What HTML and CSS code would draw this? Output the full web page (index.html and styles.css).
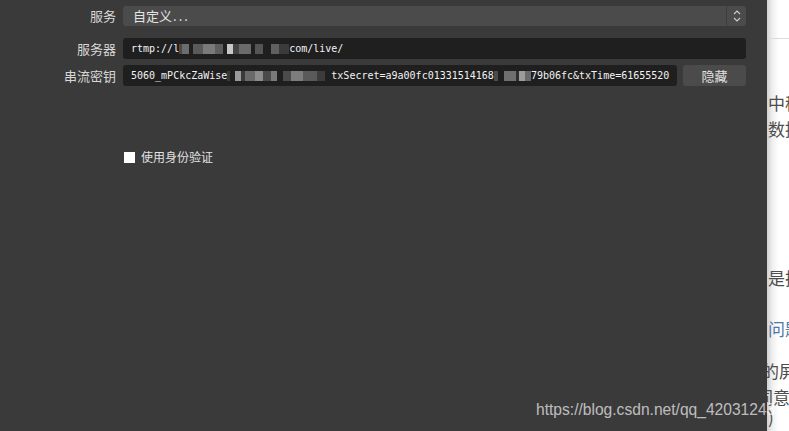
FILE: index.html
```html
<!DOCTYPE html>
<html>
<head>
<meta charset="utf-8">
<link rel="stylesheet" href="styles.css">
</head>
<body>
<div class="screen">
  <div class="obs">
    <div class="form">
      <div class="label l1">服务</div>
      <div class="combo">
        <span class="combo-text">自定义<span class="dots">...</span></span>
        <span class="combo-arrows">
          <svg width="10" height="16" viewBox="0 0 10 16"><path d="M2 6 L5 3 L8 6" fill="none" stroke="#cfcfcf" stroke-width="1.1"/><path d="M2 10 L5 13 L8 10" fill="none" stroke="#cfcfcf" stroke-width="1.1"/></svg>
        </span>
      </div>
      <div class="label l2">服务器</div>
      <div class="input i2"><span>rtmp://l</span><span class="blur b1"></span><span>com/live/</span></div>
      <div class="label l3">串流密钥</div>
      <div class="keyrow">
        <div class="input i3"><span>5060_mPCkcZaWise</span><span class="blur b2"></span><span>txSecret=a9a00fc01331514168</span><span class="blur b3"></span><span>79b06fc&amp;txTime=61655520</span></div>
        <button class="btn">隐藏</button>
      </div>
    </div>
    <label class="check"><span class="box"></span><span class="check-text">使用身份验证</span></label>
  </div>
  <div class="page">
    <div class="page-line"></div>
    <div class="page-text t1">中移动</div>
    <div class="page-text t2">数据</div>
    <div class="page-text t3">是把</div>
    <div class="page-text t4">问题</div>
    <div class="page-text t5">的屏</div>
    <div class="page-text t6">同意</div>
    <div class="page-text t7">)</div>
  </div>
  <div class="watermark">https://blog.csdn.net/qq_42031243</div>
</div>
</body>
</html>
```

FILE: styles.css
```css
html, body {
  margin: 0;
  padding: 0;
  width: 789px;
  height: 431px;
  overflow: hidden;
  background: #ffffff;
}

.screen {
  position: relative;
  display: flex;
  width: 789px;
  height: 431px;
  overflow: hidden;
}

.obs {
  width: 767px;
  flex: none;
  background: #3a3a3a;
  box-sizing: border-box;
  padding: 6px 21px 0 0;
  font-family: "Noto Sans CJK SC", "Noto Sans", sans-serif;
  font-size: 13px;
  color: #dcdcdc;
}

.form {
  display: grid;
  grid-template-columns: 116px 1fr;
  column-gap: 7px;
  row-gap: 6px;
  align-items: center;
}

.label {
  text-align: right;
  line-height: 20px;
  color: #d8d8d8;
}

.l1 { margin-bottom: 6px; }
.combo { margin-bottom: 6px; }

.combo {
  height: 20px;
  background: #4b4b4b;
  border-radius: 3px;
  display: flex;
  align-items: center;
  justify-content: space-between;
}

.combo-text {
  padding-left: 10px;
  line-height: 20px;
  color: #e4e4e4;
}

.dots {
  letter-spacing: 2px;
  margin-left: 1px;
}

.combo-arrows {
  width: 19px;
  height: 20px;
  border-left: 1px solid #3c3c3c;
  display: flex;
  align-items: center;
  justify-content: center;
}

.input {
  height: 21px;
  background: #1f1f1f;
  border-radius: 3px;
  box-sizing: border-box;
  padding-left: 8px;
  display: flex;
  align-items: center;
  font-family: "DejaVu Sans Mono", "Liberation Mono", monospace;
  font-size: 10px;
  color: #f2f2f2;
  white-space: nowrap;
  overflow: hidden;
}

.keyrow {
  display: flex;
  gap: 6px;
}

.i3 { flex: 1; }

.btn {
  width: 63px;
  height: 21px;
  padding: 0;
  border: none;
  border-radius: 3px;
  background: #4b4b4b;
  color: #e0e0e0;
  font-family: "Noto Sans CJK SC", "Noto Sans", sans-serif;
  font-size: 13px;
  line-height: 21px;
}

.blur {
  display: inline-block;
  height: 10px;
  flex: none;
}

.b1 {
  width: 110px;
  background:
    linear-gradient(to right,
      #4a4a4a 0 3px, #6c6c6c 3px 10px, #1f1f1f 10px 14px,
      #5a5a5a 14px 24px, #7a7a7a 24px 36px, #5e5e5e 36px 44px,
      #1f1f1f 44px 48px, #c8c8c8 48px 54px, #444 54px 60px,
      #6a6a6a 60px 72px, #1f1f1f 72px 76px, #555 76px 84px,
      #1f1f1f 84px 92px, #606060 92px 100px, #3a3a3a 100px 110px);
}

.b2 {
  width: 104px;
  background:
    linear-gradient(to right,
      #3a3a3a 0 3px, #1f1f1f 3px 8px, #9a9a9a 8px 14px, #3a3a3a 14px 18px,
      #6a6a6a 18px 28px, #8c8c8c 28px 36px, #4a4a4a 36px 44px,
      #7a7a7a 44px 50px, #1f1f1f 50px 56px, #4b4b4b 56px 64px,
      #7d7d7d 64px 76px, #5a5a5a 76px 90px, #3c3c3c 90px 98px, #1f1f1f 98px 104px);
}

.b3 {
  width: 37px;
  background:
    linear-gradient(to right,
      #4a4a4a 0 4px, #1f1f1f 4px 10px, #6f6f6f 10px 22px,
      #2f2f2f 22px 25px, #9c9c9c 25px 31px, #6a6a6a 31px 37px);
}

.check {
  display: flex;
  align-items: center;
  margin-top: 65px;
  margin-left: 124px;
  height: 12px;
}

.box {
  width: 11px;
  height: 11px;
  background: #ffffff;
  flex: none;
}

.check-text {
  margin-left: 6px;
  font-size: 12px;
  color: #e2e2e2;
  line-height: 12px;
}

.page {
  flex: 1;
  overflow: hidden;
  background: linear-gradient(to right, #cfcfcf 0, #eeeeee 5px, #ffffff 12px);
  font-family: "Noto Sans CJK SC", sans-serif;
  font-size: 17px;
  color: #4d4d4d;
}

.page-line {
  height: 1px;
  background: #dcdcdc;
  margin-top: 38px;
}

.page-text {
  line-height: 20px;
  white-space: nowrap;
  padding-left: 1px;
}

.t1 { margin-top: 54px; }
.t2 { margin-top: 6px; }
.t3 { margin-top: 129px; }
.t4 { margin-top: 31px; color: #4f77a8; }
.t5 { margin-top: 22px; margin-left: -6px; }
.t6 { margin-top: 6px; margin-left: -12px; }
.t7 { margin-top: 0; }

.watermark {
  position: absolute;
  left: 536px;
  top: 401px;
  font-family: "Liberation Sans", Arial, sans-serif;
  font-size: 15.6px;
  color: rgba(255, 255, 255, 0.68);
  white-space: nowrap;
}
```
